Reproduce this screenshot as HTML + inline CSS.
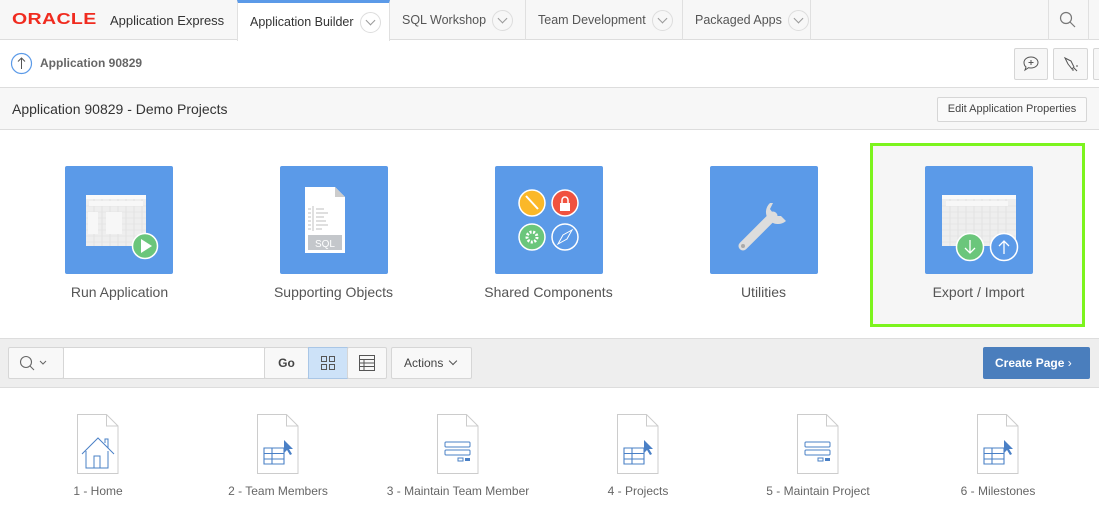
<!DOCTYPE html>
<html><head><style>
*{box-sizing:border-box;margin:0;padding:0}
body{width:1099px;height:516px;overflow:hidden;font-family:"Liberation Sans",sans-serif;background:#fff;position:relative;color:#404040}
.a{position:absolute}
.top{left:0;top:0;width:1099px;height:40px;background:#f7f7f7;border-bottom:1px solid #ddd}
.tab{top:0;height:40px;border-right:1px solid #e0e0e0;font-size:12.5px;color:#555;display:flex;align-items:center;padding-left:12px;white-space:nowrap}
.chev{display:inline-block;flex:none;width:21px;height:21px;border:1px solid #ddd;border-radius:50%;margin-left:6px;position:relative;background:#f7f7f7}
.chev:after{content:"";position:absolute;left:6px;top:4px;width:6px;height:6px;border-right:1px solid #999;border-bottom:1px solid #999;transform:rotate(45deg)}
.btn{border:1px solid #d6d6d6;background:#f8f8f8;border-radius:2px}
.tile{width:108px;height:108px;background:#5b9ae8;border-radius:2px;top:166px}
.lbl{top:284px;width:215px;text-align:center;font-size:14px;color:#555}
.pg{top:414px;width:42px;height:60px}
.pl{top:484px;width:180px;text-align:center;font-size:12px;color:#666}
</style></head><body>
<div class="a top"></div>
<div class="a" style="left:12px;top:11px;font-size:16px;font-weight:bold;color:#f02b1f;letter-spacing:0.3px;transform:scaleX(1.22);transform-origin:left">ORACLE</div>
<div class="a" style="left:110px;top:13px;font-size:13px;color:#333">Application Express</div>
<div class="a tab" style="left:237px;width:153px;background:#fff;border-left:1px solid #e0e0e0;border-top:3px solid #5b9ae8;color:#333;height:41px">Application Builder<span class="chev" style="background:#fff"></span></div>
<div class="a tab" style="left:390px;width:136px">SQL Workshop<span class="chev"></span></div>
<div class="a tab" style="left:526px;width:157px">Team Development<span class="chev"></span></div>
<div class="a tab" style="left:683px;width:128px">Packaged Apps<span class="chev"></span></div>
<div class="a" style="left:1048px;top:0;width:41px;height:40px;border-left:1px solid #e0e0e0;border-right:1px solid #e0e0e0"></div>
<svg class="a" style="left:1059px;top:11px" width="18" height="18"><circle cx="7" cy="7" r="5.5" fill="none" stroke="#777" stroke-width="1.2"/><path d="M11 11l5 5" stroke="#777" stroke-width="1.2"/></svg>

<div class="a" style="left:0;top:87px;width:1099px;height:1px;background:#ddd"></div>
<svg class="a" style="left:10px;top:52px" width="23" height="23"><circle cx="11.5" cy="11.5" r="10" fill="#fff" stroke="#5b9ae8" stroke-width="1.2"/><path d="M11.5 17V6M8 9.5l3.5-3.5 3.5 3.5" fill="none" stroke="#555" stroke-width="1"/></svg>
<div class="a" style="left:40px;top:56px;font-size:12px;font-weight:bold;color:#666">Application 90829</div>
<div class="a btn" style="left:1014px;top:48px;width:34px;height:32px;background:#f7f7f7"></div>
<svg class="a" style="left:1022px;top:55px" width="18" height="18"><path d="M9 2c4 0 7 2.5 7 5.5S13 13 9 13c-1 0-2 0-2.5-.3L3 15l1-3C2.8 11 2 9.5 2 7.5 2 4.5 5 2 9 2z" fill="none" stroke="#555" stroke-width="1"/><path d="M9 5v5M6.5 7.5h5" stroke="#555"/></svg>
<div class="a btn" style="left:1053px;top:48px;width:35px;height:32px;background:#f7f7f7"></div>
<svg class="a" style="left:1062px;top:55px" width="18" height="18"><path d="M3 3l6 3 3 6-2 2-4-5z" fill="none" stroke="#555"/><path d="M12 13l3 3M14 11l2 0M11 14l0 2" stroke="#555"/></svg>
<div class="a btn" style="left:1093px;top:48px;width:10px;height:32px;background:#f7f7f7"></div>

<div class="a" style="left:0;top:88px;width:1099px;height:42px;background:#f7f7f7;border-bottom:1px solid #ddd"></div>
<div class="a" style="left:12px;top:101px;font-size:14px;color:#333">Application 90829 - Demo Projects</div>
<div class="a btn" style="left:937px;top:97px;width:150px;height:25px;font-size:11px;color:#444;text-align:center;line-height:23px;background:#fafafa">Edit Application Properties</div>

<div class="a" style="left:870px;top:143px;width:215px;height:184px;border:3px solid #7cf41d;background:#f6f6f6"></div>

<div class="a tile" style="left:65px"></div>
<svg class="a" style="left:65px;top:166px" width="108" height="108"><rect x="21" y="29" width="60" height="51" fill="#eee"/><rect x="21" y="29" width="60" height="4" fill="#fafafa"/><g stroke="#ddd" stroke-width="0.6"><path d="M21 40h60M21 46h60M21 52h60M21 58h60M21 64h60M21 70h60M21 76h60M29 33v47M37 33v47M45 33v47M53 33v47M61 33v47M69 33v47M77 33v47"/></g><rect x="24" y="35" width="54" height="5" fill="#f7f7f7"/><rect x="23" y="46" width="10" height="22" fill="#f7f7f7"/><rect x="41" y="46" width="16" height="22" fill="#f7f7f7"/><circle cx="80" cy="80" r="12.5" fill="#6bc67b" stroke="#fff" stroke-width="1.5"/><path d="M76 73v14l11-7z" fill="#fff"/></svg>
<div class="a tile" style="left:280px"></div>
<svg class="a" style="left:280px;top:166px" width="108" height="108"><path d="M25 21h30l10 10v56H25z" fill="#fff"/><path d="M55 21v10h10z" fill="#ccc"/><rect x="28" y="69" width="34" height="15" fill="#c4c7cb"/><text x="45" y="81" font-size="10" fill="#fff" text-anchor="middle" font-family="Liberation Sans">SQL</text><g stroke="#ccc" stroke-width="1.2"><path d="M28 43h3M28 47h3M28 51h3M28 55h3M28 59h3M28 63h3M33 40v25M36 43h8M36 47h12M36 51h8M36 55h10M36 59h12M36 63h6"/></g></svg>
<div class="a tile" style="left:495px"></div>
<svg class="a" style="left:495px;top:166px" width="108" height="108"><circle cx="37" cy="37" r="13" fill="#fbb829" stroke="#fff" stroke-width="1.5"/><path d="M31 30l12 13" stroke="#fff" stroke-width="2"/><circle cx="70" cy="37" r="13" fill="#f0523f" stroke="#fff" stroke-width="1.5"/><rect x="65" y="37" width="10" height="8" fill="#fff"/><path d="M67 37v-3a3 3 0 016 0v3" fill="none" stroke="#fff" stroke-width="1.5"/><circle cx="37" cy="71" r="13" fill="#6bc67b" stroke="#fff" stroke-width="1.5"/><circle cx="37" cy="71" r="5" fill="none" stroke="#fff" stroke-width="3" stroke-dasharray="2 1.5"/><circle cx="70" cy="71" r="13" fill="#5b9ae8" stroke="#fff" stroke-width="1.5"/><path d="M63 78l5-9 9-5-5 9z" fill="none" stroke="#fff"/></svg>
<div class="a tile" style="left:710px"></div>
<svg class="a" style="left:710px;top:166px" width="108" height="108"><path d="M33 80l30-30" stroke="#ddd" stroke-width="9" stroke-linecap="round"/><path d="M60 37a12 12 0 1016 18l-5-5-6 0-5-7 3-6z" fill="#ddd"/><circle cx="33" cy="80" r="2" fill="#aaa"/></svg>
<div class="a tile" style="left:925px"></div>
<svg class="a" style="left:925px;top:166px" width="108" height="108"><rect x="17" y="29" width="74" height="51" fill="#eee"/><rect x="17" y="29" width="74" height="4" fill="#fafafa"/><g stroke="#ddd" stroke-width="0.6"><path d="M17 40h74M17 46h74M17 52h74M17 58h74M17 64h74M17 70h74M17 76h74M25 33v47M33 33v47M41 33v47M49 33v47M57 33v47M65 33v47M73 33v47M81 33v47"/></g><rect x="21" y="35" width="62" height="5" fill="#f7f7f7"/><circle cx="45" cy="81" r="13.5" fill="#6bc67b" stroke="#fff" stroke-width="1.5"/><path d="M45 74v13M40 82l5 5 5-5" fill="none" stroke="#fff" stroke-width="1.3"/><circle cx="79" cy="81" r="13.5" fill="#5b9ae8" stroke="#fff" stroke-width="1.5"/><path d="M79 88V75M74 80l5-5 5 5" fill="none" stroke="#fff" stroke-width="1.3"/></svg>
<div class="a lbl" style="left:12px">Run Application</div>
<div class="a lbl" style="left:226px">Supporting Objects</div>
<div class="a lbl" style="left:441px">Shared Components</div>
<div class="a lbl" style="left:656px">Utilities</div>
<div class="a lbl" style="left:871px">Export / Import</div>

<div class="a" style="left:0;top:338px;width:1099px;height:50px;background:#eee;border-top:1px solid #ddd;border-bottom:1px solid #ddd"></div>
<div class="a btn" style="left:8px;top:347px;width:56px;height:32px;background:#f8f8f8"></div>
<svg class="a" style="left:18px;top:354px" width="32" height="18"><circle cx="8" cy="8" r="5.5" fill="none" stroke="#666" stroke-width="1.1"/><path d="M12 12l4 4" stroke="#666" stroke-width="1.1"/><path d="M22 7l3 3 3-3" fill="none" stroke="#666"/></svg>
<div class="a" style="left:63px;top:347px;width:202px;height:32px;background:#fff;border:1px solid #d6d6d6"></div>
<div class="a btn" style="left:264px;top:347px;width:45px;height:32px;font-size:12px;font-weight:bold;text-align:center;line-height:30px;color:#444">Go</div>
<div class="a" style="left:308px;top:347px;width:40px;height:32px;background:#cde2f8;border:1px solid #a9c6e6"></div>
<svg class="a" style="left:320px;top:355px" width="16" height="16"><g fill="none" stroke="#555"><rect x="1.5" y="1.5" width="5" height="5"/><rect x="9.5" y="1.5" width="5" height="5"/><rect x="1.5" y="9.5" width="5" height="5"/><rect x="9.5" y="9.5" width="5" height="5"/></g></svg>
<div class="a btn" style="left:347px;top:347px;width:40px;height:32px"></div>
<svg class="a" style="left:359px;top:355px" width="16" height="16"><rect x="0.5" y="0.5" width="15" height="15" fill="none" stroke="#555"/><path d="M0 4.5h16M0 8h16M0 11.5h16M5 4v12" stroke="#555"/></svg>
<div class="a btn" style="left:391px;top:347px;width:81px;height:32px;font-size:12px;line-height:30px;padding-left:12px;color:#444">Actions <span style="display:inline-block;width:6px;height:6px;border-right:1px solid #555;border-bottom:1px solid #555;transform:rotate(45deg);margin:0 0 3px 3px"></span></div>
<div class="a" style="left:983px;top:347px;width:107px;height:32px;background:#4a7ebd;border-radius:2px;color:#fff;font-size:12px;font-weight:bold;line-height:32px;padding-left:12px">Create Page <span style="font-weight:normal">&#x203A;</span></div>

<svg width="0" height="0" style="position:absolute"><defs><symbol id="f" viewBox="0 0 42 60"><path d="M0.5 0.5h29l11.5 11.5v47.5H0.5z" fill="#fff" stroke="#ccc"/><path d="M29.5 0.5v11.5h11.5" fill="none" stroke="#ccc"/></symbol></defs></svg>
<svg class="a pg" style="left:77px"><use href="#f"/><path d="M5 40l16-16 16 16M9 37v17h22V37M17 54v-12h6v12M28 29v-4h3v9" fill="none" stroke="#4a80c6" stroke-width="1"/></svg>
<svg class="a pg" style="left:257px"><use href="#f"/><path d="M7 34h20v16H7zM7 39.5h20M7 45h20M15 34v16" fill="none" stroke="#4a80c6" stroke-width="1.1"/><path d="M27 26v13l3-3 3 5 2-1-3-5h4z" fill="#4a80c6"/></svg>
<svg class="a pg" style="left:437px"><use href="#f"/><rect x="8" y="28" width="25" height="5" rx="1" fill="none" stroke="#4a80c6"/><rect x="8" y="36" width="25" height="5" rx="1" fill="none" stroke="#4a80c6"/><rect x="21" y="44" width="5" height="3" fill="none" stroke="#4a80c6"/><rect x="28" y="44" width="5" height="3" fill="#4a80c6"/></svg>
<svg class="a pg" style="left:617px"><use href="#f"/><path d="M7 34h20v16H7zM7 39.5h20M7 45h20M15 34v16" fill="none" stroke="#4a80c6" stroke-width="1.1"/><path d="M27 26v13l3-3 3 5 2-1-3-5h4z" fill="#4a80c6"/></svg>
<svg class="a pg" style="left:797px"><use href="#f"/><rect x="8" y="28" width="25" height="5" rx="1" fill="none" stroke="#4a80c6"/><rect x="8" y="36" width="25" height="5" rx="1" fill="none" stroke="#4a80c6"/><rect x="21" y="44" width="5" height="3" fill="none" stroke="#4a80c6"/><rect x="28" y="44" width="5" height="3" fill="#4a80c6"/></svg>
<svg class="a pg" style="left:977px"><use href="#f"/><path d="M7 34h20v16H7zM7 39.5h20M7 45h20M15 34v16" fill="none" stroke="#4a80c6" stroke-width="1.1"/><path d="M27 26v13l3-3 3 5 2-1-3-5h4z" fill="#4a80c6"/></svg>
<div class="a pl" style="left:8px">1 - Home</div>
<div class="a pl" style="left:188px">2 - Team Members</div>
<div class="a pl" style="left:368px">3 - Maintain Team Member</div>
<div class="a pl" style="left:548px">4 - Projects</div>
<div class="a pl" style="left:728px">5 - Maintain Project</div>
<div class="a pl" style="left:908px">6 - Milestones</div>
</body></html>
